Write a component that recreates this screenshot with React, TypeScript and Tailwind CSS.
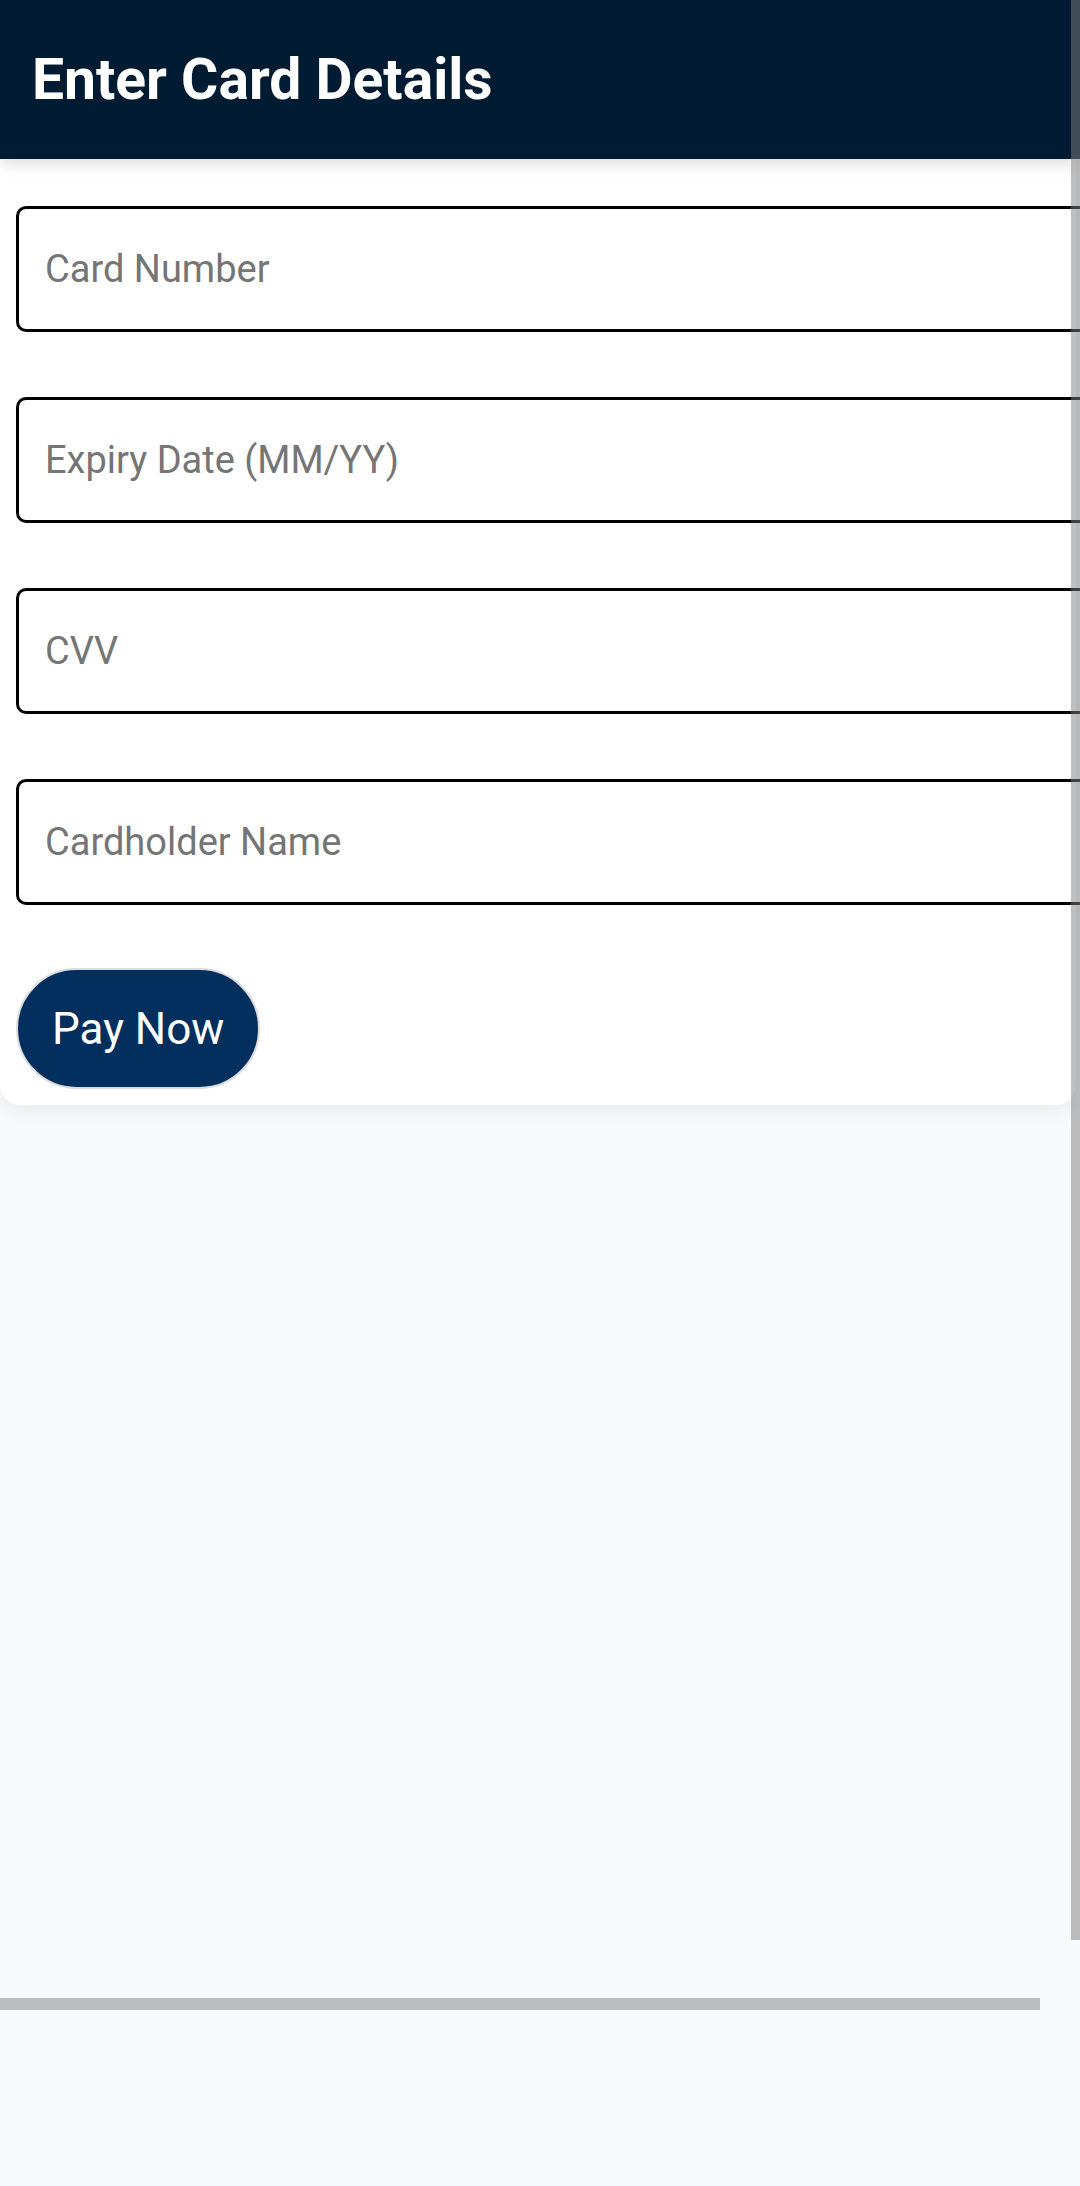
import React from "react";

const fields = ["Card Number", "Expiry Date (MM/YY)", "CVV", "Cardholder Name"];

export default function App() {
  return (
    <div
      className="relative w-[1080px] h-[2186px] overflow-hidden bg-[#f8f9fb]"
      style={{ fontFamily: "Roboto, 'Noto Sans', sans-serif" }}
    >
      <header className="relative z-10 h-[159px] bg-[#001b32] px-[32px] flex items-center shadow-[0_6px_14px_rgba(0,0,0,0.12)]">
        <h1 className="text-[57px] font-bold text-white leading-none">Enter Card Details</h1>
      </header>

      <main className="w-[1076px] bg-white rounded-b-[20px] pt-[47px] pl-[16px] pb-[16px] flex flex-col gap-[65px] shadow-[0_6px_18px_rgba(0,0,0,0.06)]">
        {fields.map((f) => (
          <div
            key={f}
            className="w-[1150px] shrink-0 h-[126px] border-[3px] border-black rounded-[10px] flex items-center pl-[26px]"
          >
            <span className="text-[38px] text-[#757575] leading-none">{f}</span>
          </div>
        ))}
        <div className="-mt-[2px]">
          <button className="h-[121px] px-[34px] rounded-full bg-[#022f5e] border-[2px] border-[#dcdcdc] text-white text-[44px] leading-none">
            Pay Now
          </button>
        </div>
      </main>

      <div className="absolute right-0 top-0 w-[9px] h-[1940px] bg-[rgba(126,126,126,0.5)] z-20" />
      <div className="absolute left-0 top-[1998px] w-[1040px] h-[12px] bg-[#bdbebd] z-20" />
    </div>
  );
}
